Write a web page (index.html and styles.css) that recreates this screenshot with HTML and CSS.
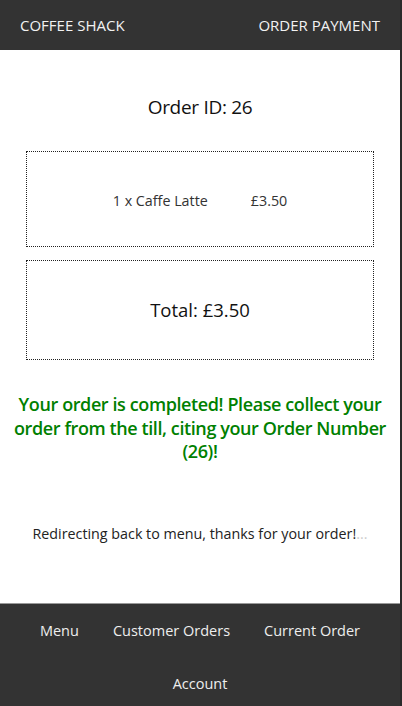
FILE: index.html
```html
<!DOCTYPE html>
<html>
<head>
<meta charset="utf-8">
<link rel="stylesheet" href="styles.css">
</head>
<body>
<div class="page">
  <header class="topbar">
    <span class="brand">COFFEE SHACK</span>
    <span class="title">ORDER PAYMENT</span>
  </header>
  <main class="content">
    <h1 class="order-id">Order ID: 26</h1>
    <section class="box items">
      <div class="item"><span class="item-name">1 x Caffe Latte</span><span class="item-price">£3.50</span></div>
    </section>
    <section class="box total">
      <span class="total-text">Total: £3.50</span>
    </section>
    <p class="complete">Your order is completed! Please collect your order from the till, citing your Order Number (26)!</p>
    <p class="redirect">Redirecting back to menu, thanks for your order!<span class="dots">...</span></p>
  </main>
  <footer class="bottombar">
    <nav class="nav">
      <a class="nav-link">Menu</a>
      <a class="nav-link">Customer Orders</a>
      <a class="nav-link">Current Order</a>
      <a class="nav-link">Account</a>
    </nav>
  </footer>
</div>
</body>
</html>
```
FILE: styles.css
```css
html, body {
  margin: 0;
  padding: 0;
  background: #2a2a2a;
  height: 100%;
}
body {
  font-family: "Open Sans", "Noto Sans", sans-serif;
}
.page {
  width: 400px;
  height: 706px;
  background: #fff;
  display: flex;
  flex-direction: column;
}
.topbar {
  height: 50px;
  background: #333;
  color: #f2f2f2;
  display: flex;
  justify-content: space-between;
  align-items: center;
  padding: 0 20px;
  font-size: 15px;
}
.content {
  flex: 1;
  display: flex;
  flex-direction: column;
  align-items: center;
  padding: 0 26px;
}
.order-id {
  margin: 42px 0 0;
  height: 30px;
  font-size: 19px;
  font-weight: 500;
  line-height: 30px;
  color: #111;
  letter-spacing: -0.3px;
}
.box {
  align-self: stretch;
  border: 1px dotted #222;
  display: flex;
  align-items: center;
  justify-content: center;
}
.items {
  margin-top: 29px;
  height: 94px;
}
.item {
  display: flex;
  gap: 43px;
  font-size: 14.3px;
  color: #333;
  transform: translateY(1px);
}
.total {
  margin-top: 13px;
  height: 98px;
}
.total-text {
  font-size: 18.5px;
  color: #111;
  font-weight: 500;
  transform: translateY(-1px);
}
.complete {
  margin: 33px -24px 0;
  text-align: center;
  color: #008000;
  font-size: 18px;
  line-height: 23.5px;
  font-weight: 600;
  letter-spacing: -0.4px;
}
.redirect {
  margin: 60px 0 0;
  font-size: 14.3px;
  color: #222;
}
.dots {
  color: #ccc;
}
.bottombar {
  background: #333;
  border-top: 1px solid #999;
  height: 102px;
}
.nav {
  display: flex;
  flex-wrap: wrap;
  justify-content: center;
  padding: 0 20px;
  row-gap: 0;
}
.nav-link {
  color: #eee;
  font-size: 14.5px;
  padding: 0 17px;
  line-height: 53px;
  height: 53px;
}
```
